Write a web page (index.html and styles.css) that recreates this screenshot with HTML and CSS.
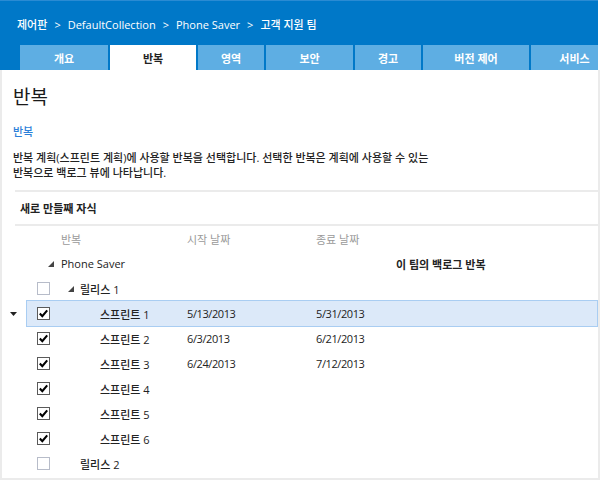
FILE: index.html
```html
<!DOCTYPE html>
<html lang="ko">
<head>
<meta charset="utf-8">
<title>반복</title>
<link rel="stylesheet" href="styles.css">
</head>
<body>
<div class="frame">
  <header class="top">
    <nav class="crumbs">
      <span>제어판</span><span class="sep">&gt;</span><span>DefaultCollection</span><span class="sep">&gt;</span><span>Phone Saver</span><span class="sep">&gt;</span><span>고객 지원 팀</span>
    </nav>
    <div class="tabs">
      <div class="tab t-overview">개요</div>
      <div class="tab t-iter active">반복</div>
      <div class="tab t-area">영역</div>
      <div class="tab t-sec">보안</div>
      <div class="tab t-alert">경고</div>
      <div class="tab t-vc">버전 제어</div>
      <div class="tab t-svc">서비스</div>
    </div>
  </header>
  <main class="content">
    <section class="intro">
      <h1 class="title">반복</h1>
      <a class="link" href="#">반복</a>
      <p class="desc">반복 계획(스프린트 계획)에 사용할 반복을 선택합니다. 선택한 반복은 계획에 사용할 수 있는<br>반복으로 백로그 뷰에 나타납니다.</p>
    </section>
    <div class="rule first"></div>
    <div class="toolbar">새로 만들째 자식</div>
    <div class="rule"></div>
    <div class="grid">
      <div class="row head">
        <div class="ind"></div>
        <div class="band">
          <div class="c-chk"></div>
          <div class="c-name lvl-h">반복</div>
          <div class="c-start">시작 날짜</div>
          <div class="c-end">종료 날짜</div>
          <div class="c-back"></div>
        </div>
      </div>
      <div class="row">
        <div class="ind"></div>
        <div class="band">
          <div class="c-chk"></div>
          <div class="c-name lvl-0"><span class="tog"><svg width="6" height="6" viewBox="0 0 6 6"><path d="M6 0V6H0Z" fill="#444"/></svg></span>Phone Saver</div>
          <div class="c-start"></div>
          <div class="c-end"></div>
          <div class="c-back strong">이 팀의 백로그 반복</div>
        </div>
      </div>
      <div class="row">
        <div class="ind"></div>
        <div class="band">
          <div class="c-chk"><span class="cb"></span></div>
          <div class="c-name lvl-1"><span class="tog"><svg width="6" height="6" viewBox="0 0 6 6"><path d="M6 0V6H0Z" fill="#444"/></svg></span>릴리스 1</div>
          <div class="c-start"></div>
          <div class="c-end"></div>
          <div class="c-back"></div>
        </div>
      </div>
      <div class="row sel">
        <div class="ind"><svg width="7" height="4" viewBox="0 0 7 4"><path d="M0 0H7L3.5 4Z" fill="#222"/></svg></div>
        <div class="band">
          <div class="c-chk"><span class="cb on"><svg width="11" height="11" viewBox="0 0 11 11"><path d="M1.8 5.6L4.3 8.2L9.2 2.4" fill="none" stroke="#000" stroke-width="2.1"/></svg></span></div>
          <div class="c-name lvl-2">스프린트 1</div>
          <div class="c-start date">5/13/2013</div>
          <div class="c-end date">5/31/2013</div>
          <div class="c-back"></div>
        </div>
      </div>
      <div class="row">
        <div class="ind"></div>
        <div class="band">
          <div class="c-chk"><span class="cb on"><svg width="11" height="11" viewBox="0 0 11 11"><path d="M1.8 5.6L4.3 8.2L9.2 2.4" fill="none" stroke="#000" stroke-width="2.1"/></svg></span></div>
          <div class="c-name lvl-2">스프린트 2</div>
          <div class="c-start date">6/3/2013</div>
          <div class="c-end date">6/21/2013</div>
          <div class="c-back"></div>
        </div>
      </div>
      <div class="row">
        <div class="ind"></div>
        <div class="band">
          <div class="c-chk"><span class="cb on"><svg width="11" height="11" viewBox="0 0 11 11"><path d="M1.8 5.6L4.3 8.2L9.2 2.4" fill="none" stroke="#000" stroke-width="2.1"/></svg></span></div>
          <div class="c-name lvl-2">스프린트 3</div>
          <div class="c-start date">6/24/2013</div>
          <div class="c-end date">7/12/2013</div>
          <div class="c-back"></div>
        </div>
      </div>
      <div class="row">
        <div class="ind"></div>
        <div class="band">
          <div class="c-chk"><span class="cb on"><svg width="11" height="11" viewBox="0 0 11 11"><path d="M1.8 5.6L4.3 8.2L9.2 2.4" fill="none" stroke="#000" stroke-width="2.1"/></svg></span></div>
          <div class="c-name lvl-2">스프린트 4</div>
          <div class="c-start"></div>
          <div class="c-end"></div>
          <div class="c-back"></div>
        </div>
      </div>
      <div class="row">
        <div class="ind"></div>
        <div class="band">
          <div class="c-chk"><span class="cb on"><svg width="11" height="11" viewBox="0 0 11 11"><path d="M1.8 5.6L4.3 8.2L9.2 2.4" fill="none" stroke="#000" stroke-width="2.1"/></svg></span></div>
          <div class="c-name lvl-2">스프린트 5</div>
          <div class="c-start"></div>
          <div class="c-end"></div>
          <div class="c-back"></div>
        </div>
      </div>
      <div class="row">
        <div class="ind"></div>
        <div class="band">
          <div class="c-chk"><span class="cb on"><svg width="11" height="11" viewBox="0 0 11 11"><path d="M1.8 5.6L4.3 8.2L9.2 2.4" fill="none" stroke="#000" stroke-width="2.1"/></svg></span></div>
          <div class="c-name lvl-2">스프린트 6</div>
          <div class="c-start"></div>
          <div class="c-end"></div>
          <div class="c-back"></div>
        </div>
      </div>
      <div class="row">
        <div class="ind"></div>
        <div class="band">
          <div class="c-chk"><span class="cb"></span></div>
          <div class="c-name lvl-1b">릴리스 2</div>
          <div class="c-start"></div>
          <div class="c-end"></div>
          <div class="c-back"></div>
        </div>
      </div>
    </div>
  </main>
</div>
</body>
</html>
```

FILE: styles.css
```css
* { box-sizing: border-box; }

body {
  margin: 0;
  background: #fff;
  color: #222;
  font-family: "Open Sans", "Noto Sans CJK KR", sans-serif;
  font-size: 11px;
  font-weight: 500;
}

.frame {
  width: 601px;
  height: 480px;
  overflow: hidden;
}

/* header */
.top {
  width: 598px;
  height: 70px;
  background: #0078c8;
  border-top: 1px solid #2a8bd3;
  padding-top: 15px;
  overflow: hidden;
}

.crumbs {
  display: flex;
  align-items: center;
  height: 16px;
  padding-left: 17px;
  color: #fff;
  font-size: 11px;
  font-weight: 500;
  white-space: nowrap;
}

.crumbs .sep {
  padding: 0 7px;
}

.tabs {
  display: flex;
  gap: 2px;
  margin-top: 13px;
  padding-left: 20px;
  height: 25px;
}

.tab {
  display: flex;
  align-items: center;
  justify-content: center;
  flex-shrink: 0;
  background: #5eaee3;
  color: #fff;
  font-weight: 700;
  font-size: 11px;
  white-space: nowrap;
}

.tab.active {
  background: #fff;
  color: #222;
}

.t-overview { width: 88px; }
.t-iter { width: 86px; }
.t-area { width: 66px; }
.t-sec { width: 87px; }
.t-alert { width: 66px; }
.t-vc { width: 106px; }
.t-svc { width: 87px; }

/* content */
.content {
  width: 600px;
  height: 410px;
  border: 2px solid #ebebeb;
  border-top: 0;
}

.intro {
  padding: 14px 0 0 11px;
}

.title {
  margin: 0;
  font-size: 19px;
  font-weight: 400;
  line-height: 26px;
  color: #1a1a1a;
}

.link {
  display: block;
  margin-top: 14px;
  line-height: 16px;
  color: #2b7fd9;
  text-decoration: none;
}

.desc {
  margin: 10px 0 0;
  line-height: 15px;
}

.rule {
  margin-left: 13px;
  height: 2px;
  background: #ebebeb;
}

.rule.first {
  margin-top: 10px;
}

.toolbar {
  height: 32px;
  display: flex;
  align-items: center;
  padding-left: 18px;
  font-weight: 600;
}

/* grid */
.row {
  display: flex;
  height: 25px;
  align-items: center;
}

.ind {
  width: 25px;
  flex-shrink: 0;
  display: flex;
  align-items: center;
  padding-left: 8px;
}

.band {
  flex: 1;
  height: 25px;
  margin-right: 1px;
  display: flex;
  align-items: center;
}

.row.sel .band {
  background: #dce9f9;
  outline: 1px solid #a9cdf2;
}

.row.head {
  color: #9a9a9a;
  font-weight: 400;
}

.c-chk {
  width: 26px;
  flex-shrink: 0;
  padding-left: 10px;
  display: flex;
  align-items: center;
}

.c-name {
  width: 134px;
  flex-shrink: 0;
  display: flex;
  align-items: center;
  white-space: nowrap;
}

.c-start {
  width: 129px;
  flex-shrink: 0;
}

.c-end {
  width: 86px;
  flex-shrink: 0;
}

.c-back {
  flex: 1;
  white-space: nowrap;
}

.strong {
  font-weight: 700;
}

.date {
  letter-spacing: -0.4px;
}

.lvl-h { padding-left: 8px; }
.lvl-0 { margin-left: -6px; padding-left: 1px; }
.lvl-1 { padding-left: 15px; }
.lvl-1b { padding-left: 27px; }
.lvl-2 { padding-left: 47px; }

.lvl-0 .tog { width: 13px; }

.tog {
  width: 12px;
  display: flex;
  align-items: center;
  flex-shrink: 0;
}

.cb {
  width: 13px;
  height: 13px;
  border: 1px solid #b7bcc9;
  background: #fff;
  display: flex;
  align-items: center;
  justify-content: center;
}

.cb.on {
  border-color: #5a5a5a;
}
```
